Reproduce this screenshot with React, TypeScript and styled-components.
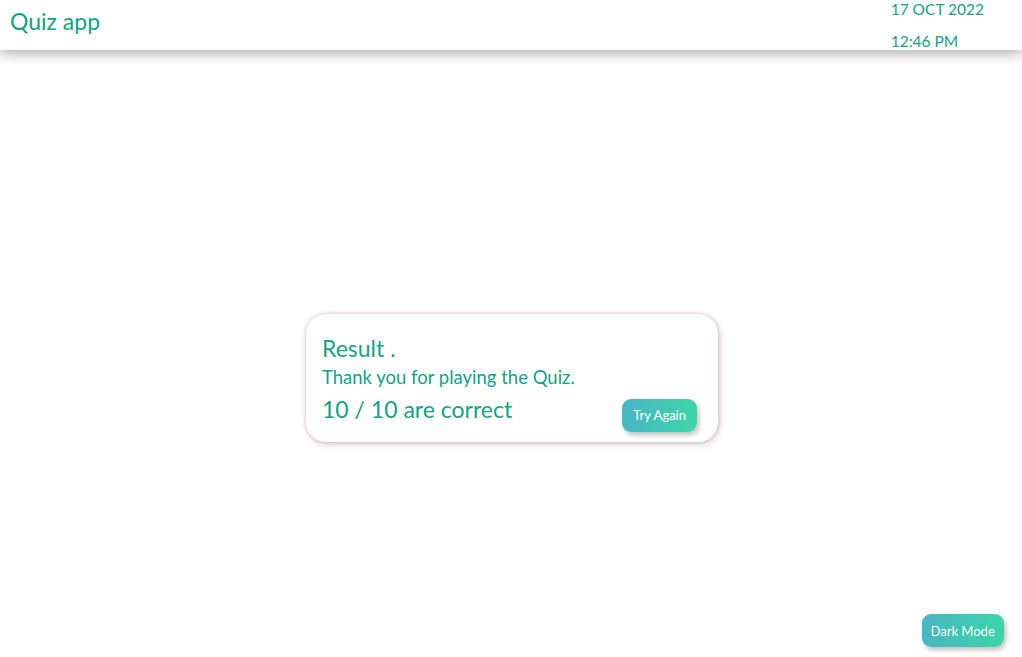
import React from "react";
import styled, { createGlobalStyle } from "styled-components";

const Global = createGlobalStyle`
  html, body { margin: 0; padding: 0; background: #ffffff; }
  body { font-family: "Lato", "Noto Sans", sans-serif; color: #16a085; }
  * { box-sizing: border-box; }
`;

const Page = styled.div`
  min-height: 657px;
  display: flex;
  flex-direction: column;
`;

const Header = styled.header`
  height: 50px;
  display: flex;
  justify-content: space-between;
  align-items: flex-start;
  padding: 0 38px 0 10px;
  box-shadow: 0 4px 12px rgba(0, 0, 0, 0.3);
`;

const Title = styled.h1`
  margin: 0;
  font-size: 23px;
  font-weight: 400;
  line-height: 43px;
`;

const DateBox = styled.div`
  display: flex;
  flex-direction: column;
  gap: 12px;
  margin-top: -1px;
  font-size: 15.5px;
  line-height: 20px;
`;

const Main = styled.main`
  flex: 1;
  display: flex;
  align-items: center;
  justify-content: center;
  padding: 48px 0 0 2px;
`;

const Card = styled.div`
  width: 412px;
  height: 128px;
  border-radius: 20px;
  background: #fff;
  box-shadow: 0 0 4px rgba(150, 110, 120, 0.45), 2px 3px 6px rgba(150, 110, 120, 0.25);
  padding: 20px 16px 0 16px;
  display: flex;
  flex-direction: column;
`;

const Heading = styled.h2`
  margin: 0;
  font-size: 23px;
  font-weight: 400;
  line-height: 28px;
`;

const Text = styled.p`
  margin: 3px 0 0;
  font-size: 18.5px;
  line-height: 24px;
`;

const Row = styled.div`
  margin-top: 5px;
  display: flex;
  justify-content: space-between;
  align-items: flex-start;
`;

const Score = styled.p`
  margin: 0;
  font-size: 23px;
  line-height: 30px;
`;

const GradientButton = styled.button<{ $padX: number }>`
  border: none;
  border-radius: 9px;
  background: linear-gradient(90deg, #4ab5c4, #3dd5a8);
  color: #fff;
  font-family: "Lato", "Noto Sans", sans-serif;
  font-size: 13px;
  padding: 0 ${(p) => p.$padX}px;
  height: 33px;
  box-shadow: 2px 3px 5px rgba(0, 0, 0, 0.25);
  cursor: pointer;
`;

const TryButton = styled(GradientButton)`
  margin: 5px 5px 0 0;
`;

const DarkButton = styled(GradientButton)`
  position: fixed;
  right: 18px;
  bottom: 10px;
`;

export default function App() {
  return (
    <Page>
      <Global />
      <Header>
        <Title>Quiz app</Title>
        <DateBox>
          <span>17 OCT 2022</span>
          <span>12:46 PM</span>
        </DateBox>
      </Header>
      <Main>
        <Card>
          <Heading>Result .</Heading>
          <Text>Thank you for playing the Quiz.</Text>
          <Row>
            <Score>10 / 10 are correct</Score>
            <TryButton $padX={11}>Try Again</TryButton>
          </Row>
        </Card>
      </Main>
      <DarkButton $padX={9}>Dark Mode</DarkButton>
    </Page>
  );
}
